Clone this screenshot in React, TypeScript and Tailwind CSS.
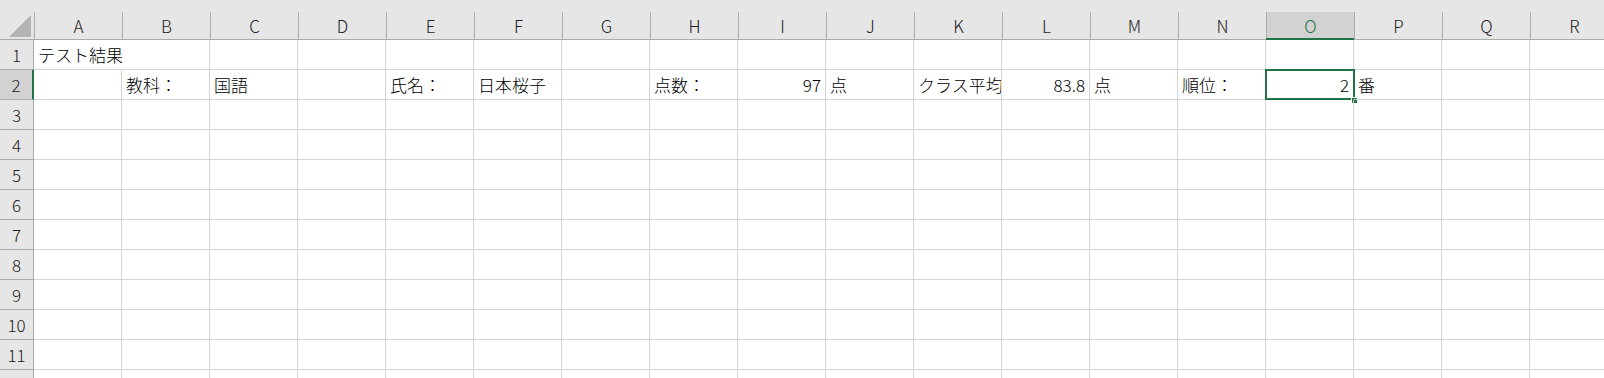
import React from "react";

const COLS = "ABCDEFGHIJKLMNOPQR".split("");
const ROWS = Array.from({ length: 12 }, (_, i) => i + 1);

type Cell = { t: string; right?: boolean; clip?: boolean; overflow?: boolean };

const DATA: Record<string, Cell> = {
  "A1": { t: "テスト結果", overflow: true },
  "B2": { t: "教科：" },
  "C2": { t: "国語" },
  "E2": { t: "氏名：" },
  "F2": { t: "日本桜子" },
  "H2": { t: "点数：" },
  "I2": { t: "97", right: true },
  "J2": { t: "点" },
  "K2": { t: "クラス平均", clip: true },
  "L2": { t: "83.8", right: true },
  "M2": { t: "点" },
  "N2": { t: "順位：" },
  "O2": { t: "2", right: true },
  "P2": { t: "番" },
};

export default function App() {
  return (
    <div className="w-[1604px] h-[378px] overflow-hidden bg-white [font-family:'Noto_Sans_CJK_JP','Noto_Sans',sans-serif] font-light text-black">
      <div className="grid grid-cols-[34px_repeat(18,88px)] grid-rows-[40px_repeat(12,30px)]">
        {/* corner */}
        <div className="bg-[#e6e6e6] border-b border-[#ababab] relative">
          <svg width="34" height="40" className="absolute left-0 top-0">
            <polygon points="9,37 31,37 31,15" fill="#b4b4b4" />
          </svg>
        </div>
        {COLS.map((c) => {
          const sel = c === "O";
          return (
            <div
              key={c}
              className={`bg-[#e6e6e6] flex flex-col ${sel ? "border-b-2 border-[#217346]" : "border-b border-[#ababab]"}`}
            >
              <div
                className={`mt-[12px] flex-1 flex items-center justify-center text-[17px] leading-none border-l border-[#ababab] ${
                  sel ? "bg-[#d2d2d2] text-[#217346]" : "text-[#222]"
                }`}
              >
                {c}
              </div>
            </div>
          );
        })}
        {ROWS.map((r) => (
          <React.Fragment key={r}>
            <div
              className={`flex items-center justify-center text-[17px] leading-none border-b border-[#ababab] ${
                r === 2
                  ? "bg-[#d2d2d2] border-r-2 border-r-[#217346] text-[#222]"
                  : "bg-[#e6e6e6] border-r border-r-[#ababab] text-[#222]"
              }`}
            >
              {r <= 11 ? r : ""}
            </div>
            {COLS.map((c) => {
              const key = `${c}${r}`;
              const d = DATA[key];
              const isSel = key === "O2";
              return (
                <div
                  key={key}
                  className={`relative flex items-center px-[4px] border-b border-r border-b-[#d4d4d4] ${
                    d?.overflow ? "border-r-transparent" : "border-r-[#d4d4d4]"
                  } ${d?.right ? "justify-end" : "justify-start"} ${d?.clip ? "overflow-hidden" : ""}`}
                >
                  {d && (
                    <span className="text-[17px] leading-none whitespace-nowrap">{d.t}</span>
                  )}
                  {isSel && (
                    <>
                      <div className="absolute left-[-1px] top-[-1px] right-[-2px] bottom-[-1px] border-2 border-[#217346] pointer-events-none" />
                      <div className="absolute right-[-5px] bottom-[-5px] w-[7px] h-[7px] bg-[#217346] border border-white" />
                    </>
                  )}
                </div>
              );
            })}
          </React.Fragment>
        ))}
      </div>
    </div>
  );
}
